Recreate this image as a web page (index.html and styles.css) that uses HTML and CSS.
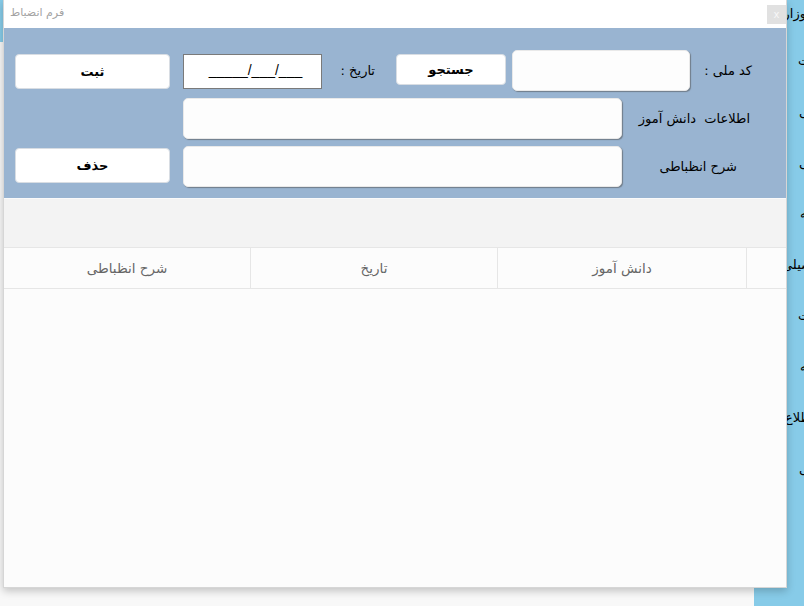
FILE: index.html
```html
<!DOCTYPE html>
<html lang="fa">
<head>
<meta charset="utf-8">
<title>فرم انضباط</title>
<link rel="stylesheet" href="styles.css">
</head>
<body>
<div class="desktop">
  <div class="main">
    <div class="topbar"></div>
  </div>
  <nav class="sidebar">
    <div class="side-title">وزارت آموزش و پرورش</div>
    <ul class="side-menu">
      <li class="m1">مدیریت</li>
      <li class="m2">دروس اصلی</li>
      <li class="m3">برنامه هفتگی</li>
      <li class="m4">کارنامه</li>
      <li class="m5">وضعیت تحصیلی</li>
      <li class="m6">غیبت</li>
      <li class="m7">مدرسه</li>
      <li class="m8">اطلاع</li>
      <li class="m9">تنظیمات کلی</li>
    </ul>
  </nav>

  <div class="window">
    <div class="titlebar">
      <span class="title">فرم انضباط</span>
      <span class="close">x</span>
    </div>

    <div class="form-panel">
      <div class="row">
        <button class="btn btn-side btn-top">ثبت</button>
        <div class="date-box">_____/___/___</div>
        <label class="lbl lbl-date">تاریخ :</label>
        <button class="btn btn-search">جستجو</button>
        <div class="field field-code"></div>
        <label class="lbl lbl-code">کد ملی :</label>
      </div>
      <div class="row">
        <div class="spacer"></div>
        <div class="field field-wide"></div>
        <label class="lbl lbl-info">اطلاعات&nbsp; دانش آموز</label>
      </div>
      <div class="row">
        <button class="btn btn-side btn-bottom">حذف</button>
        <div class="field field-wide"></div>
        <label class="lbl lbl-desc">شرح انظباطی</label>
      </div>
    </div>

    <div class="grid-toolbar"></div>

    <div class="table">
      <div class="thead">
        <div class="th">شرح انظباطی</div>
        <div class="th">تاریخ</div>
        <div class="th">دانش آموز</div>
        <div class="th th-last"></div>
      </div>
      <div class="tbody"></div>
    </div>
  </div>
</div>
</body>
</html>
```

FILE: styles.css
```css
* { box-sizing: border-box; }

html, body {
  margin: 0;
  padding: 0;
}

body {
  font-family: "DejaVu Sans", "Noto Sans", sans-serif;
  background: #f8f8f8;
}

.desktop {
  position: relative;
  width: 804px;
  height: 606px;
  overflow: hidden;
  display: flex;
  background: #f8f8f8;
}

.main {
  flex: 0 0 754px;
  min-width: 0;
}

.topbar {
  height: 42px;
  background: #87cbe8;
}

.sidebar {
  flex: 0 0 200px;
  width: 200px;
  min-width: 0;
  overflow: hidden;
  background: #87cbe8;
  direction: rtl;
  font-size: 13px;
  color: #000;
  white-space: nowrap;
}

.side-title {
  height: 28px;
  line-height: 28px;
  text-align: right;
  padding-right: 148px;
}

.side-menu {
  list-style: none;
  margin: 0;
  padding: 7px 0 0 0;
}

.side-menu li {
  height: 51px;
  line-height: 51px;
  text-align: left;
  padding-left: 44px;
}

.side-menu .m2,
.side-menu .m3,
.side-menu .m9 { padding-left: 45px; }
.side-menu .m4,
.side-menu .m7 { padding-left: 46px; }
.side-menu .m5 { padding-left: 28px; }
.side-menu .m8 { padding-left: 31px; }

.window {
  position: absolute;
  left: 3px;
  top: 0;
  width: 784px;
  height: 588px;
  background: #fcfcfc;
  border: 1px solid #d6d6d6;
  border-top: none;
  box-shadow: 0 3px 8px rgba(0, 0, 0, 0.22);
  display: flex;
  flex-direction: column;
}

.titlebar {
  height: 28px;
  flex: 0 0 28px;
  background: #ffffff;
  display: flex;
  align-items: flex-start;
  justify-content: space-between;
  padding-left: 6px;
}

.title {
  font-size: 11px;
  line-height: 26px;
  color: #a3a3a3;
  direction: rtl;
}

.close {
  width: 19px;
  height: 19px;
  margin-top: 5px;
  background: #e1e1e1;
  color: #f8f8f8;
  font-family: "Liberation Sans", sans-serif;
  font-size: 11px;
  line-height: 18px;
  text-align: center;
}

.form-panel {
  flex: 0 0 170px;
  background: #99b4d1;
  padding: 22px 0 11px 11px;
  display: flex;
  flex-direction: column;
  gap: 7px;
}

.row {
  display: flex;
  align-items: flex-start;
  height: 41px;
}

.btn {
  font-family: "DejaVu Sans", sans-serif;
  font-size: 13px;
  font-weight: bold;
  color: #000;
  background: #ffffff;
  border: 1px solid #d8dde3;
  border-radius: 4px;
  padding: 0;
  direction: rtl;
}

.btn-side {
  width: 155px;
  height: 35px;
  margin-right: 13px;
}

.btn-top { margin-top: 4px; }
.btn-bottom { margin-top: 2px; }

.spacer {
  width: 168px;
  flex: 0 0 168px;
}

.date-box {
  width: 139px;
  height: 35px;
  margin-top: 4px;
  background: #ffffff;
  border: 1px solid #7a7a7a;
  font-family: "Liberation Sans", sans-serif;
  font-size: 14px;
  line-height: 31px;
  text-align: center;
  color: #000;
  padding-left: 6px;
}

.lbl {
  font-size: 13px;
  color: #000;
  direction: rtl;
  text-align: right;
  white-space: nowrap;
  align-self: center;
}

.lbl-date {
  width: 53px;
  margin-right: 21px;
}

.btn-search {
  width: 110px;
  height: 31px;
  margin-top: 4px;
  margin-right: 6px;
}

.field {
  height: 41px;
  background: #fdfdfd;
  border: 1px solid #e9e9e9;
  border-radius: 5px;
  box-shadow: 1px 1px 1px rgba(80, 80, 80, 0.55);
}

.field-code { width: 178px; }
.lbl-code { width: 62px; }

.field-wide { width: 439px; }
.lbl-info { width: 128px; }
.lbl-desc { width: 115px; }

.grid-toolbar {
  flex: 0 0 49px;
  background: #f3f3f3;
  border-top: 1px solid #fafafa;
}

.table {
  flex: 1;
  display: flex;
  flex-direction: column;
  background: #fcfcfc;
}

.thead {
  display: grid;
  grid-template-columns: 247px 247px 249px 1fr;
  height: 42px;
  border-top: 1px solid #e6e6e6;
  border-bottom: 1px solid #e6e6e6;
  background: #fcfcfc;
}

.th {
  border-right: 1px solid #e6e6e6;
  font-size: 13.5px;
  color: #666666;
  text-align: center;
  line-height: 40px;
  direction: rtl;
}

.th-last { border-right: none; }

.tbody {
  flex: 1;
}
```
